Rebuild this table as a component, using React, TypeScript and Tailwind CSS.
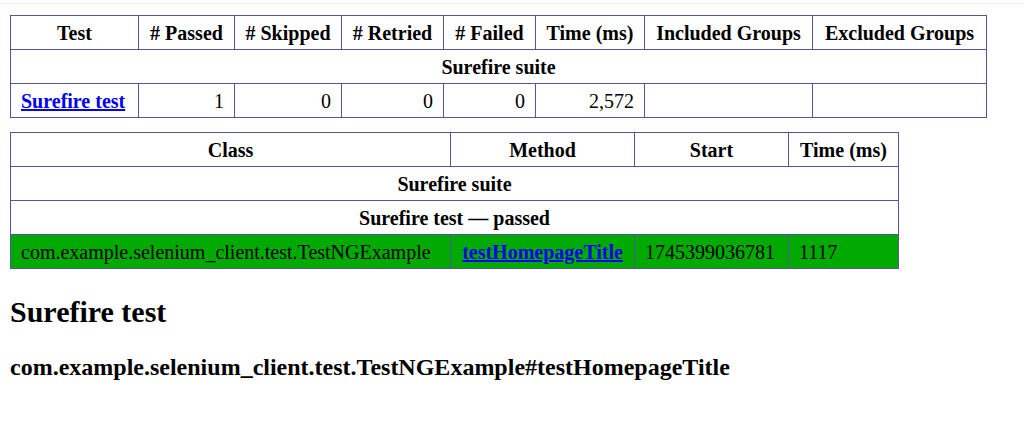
const summaryHeaders = ['Test', '# Passed', '# Skipped', '# Retried', '# Failed', 'Time (ms)', 'Included Groups', 'Excluded Groups']
const summaryWidths = ['w-[128px]', 'w-[96px]', 'w-[107px]', 'w-[102px]', 'w-[92px]', 'w-[109px]', 'w-[168px]', 'w-[174px]']

const methodHeaders = ['Class', 'Method', 'Start', 'Time (ms)']
const methodWidths = ['w-[440px]', 'w-[184px]', 'w-[154px]', 'w-[110px]']

const cell = 'border border-[#55559a] px-[10px] h-[34px] leading-[22px] whitespace-nowrap'

export default function App() {
  return (
    <div className="min-h-[430px] bg-white font-['Liberation_Serif',serif] text-[20px] text-black">
      <div className="h-[4px] border-b border-[#ececec]" />
      <div className="px-[10px] pt-[11px]">
        <table className="w-[976px] table-fixed border-collapse border border-[#55559a]">
          <thead>
            <tr>
              {summaryHeaders.map((h, i) => (
                <th key={h} className={`${cell} ${summaryWidths[i]} text-center font-bold`}>
                  {h}
                </th>
              ))}
            </tr>
          </thead>
          <tbody>
            <tr>
              <th colSpan={8} className={`${cell} text-center font-bold`}>
                Surefire suite
              </th>
            </tr>
            <tr>
              <td className={`${cell} text-left`}>
                <a href="#t1" className="font-bold text-[#0000ee] underline">
                  Surefire test
                </a>
              </td>
              <td className={`${cell} text-right`}>1</td>
              <td className={`${cell} text-right`}>0</td>
              <td className={`${cell} text-right`}>0</td>
              <td className={`${cell} text-right`}>0</td>
              <td className={`${cell} text-right`}>2,572</td>
              <td className={cell}></td>
              <td className={cell}></td>
            </tr>
          </tbody>
        </table>

        <table className="mt-[14px] w-[888px] table-fixed border-collapse border border-[#55559a]">
          <thead>
            <tr>
              {methodHeaders.map((h, i) => (
                <th key={h} className={`${cell} ${methodWidths[i]} text-center font-bold`}>
                  {h}
                </th>
              ))}
            </tr>
          </thead>
          <tbody>
            <tr>
              <th colSpan={4} className={`${cell} text-center font-bold`}>
                Surefire suite
              </th>
            </tr>
            <tr>
              <th colSpan={4} className={`${cell} text-center font-bold`}>
                Surefire test — passed
              </th>
            </tr>
            <tr className="bg-[#00aa00]">
              <td className={`${cell} text-left`}>com.example.selenium_client.test.TestNGExample</td>
              <td className={`${cell} text-center`}>
                <a href="#m1" className="font-bold text-[#0000ee] underline">
                  testHomepageTitle
                </a>
              </td>
              <td className={`${cell} text-left`}>1745399036781</td>
              <td className={`${cell} text-left`}>1117</td>
            </tr>
          </tbody>
        </table>

        <h2 className="mt-[26px] text-[30px] font-bold leading-[34px]">Surefire test</h2>
        <h3 className="mt-[25px] text-[24px] font-bold leading-[26px]">
          com.example.selenium_client.test.TestNGExample#testHomepageTitle
        </h3>
      </div>
    </div>
  )
}
